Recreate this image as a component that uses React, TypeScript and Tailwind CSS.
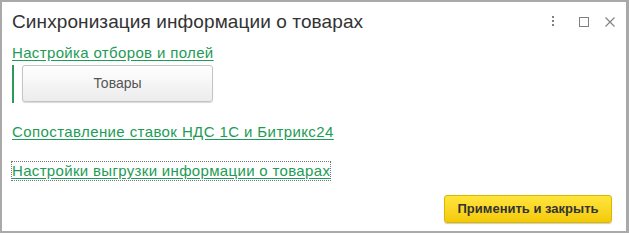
const font = { fontFamily: '"Liberation Sans", Arial, sans-serif' };

function WindowIcons() {
  return (
    <div className="flex items-center text-[#808080]">
      <svg width="4" height="12" viewBox="0 0 4 12" className="mr-[24px]">
        <rect x="1" y="0" width="2" height="2" fill="currentColor" />
        <rect x="1" y="4" width="2" height="2" fill="currentColor" />
        <rect x="1" y="8" width="2" height="2" fill="currentColor" />
      </svg>
      <svg width="10" height="10" viewBox="0 0 10 10" className="mr-[16px]">
        <rect x="0.5" y="0.5" width="9" height="9" fill="none" stroke="currentColor" strokeWidth="1" />
      </svg>
      <svg width="10" height="10" viewBox="0 0 10 10">
        <path d="M0.5 0.5 L9.5 9.5 M9.5 0.5 L0.5 9.5" stroke="currentColor" strokeWidth="1.1" fill="none" />
      </svg>
    </div>
  );
}

export default function App() {
  return (
    <div
      className="w-[629px] h-[233px] bg-white border-2 border-[#a9a9a9] border-r-[3px] flex flex-col text-[#333]"
      style={font}
    >
      <div className="flex items-start justify-between pl-[10px] pr-[11px] pt-[8px]">
        <h1 className="text-[19px] leading-[24px] tracking-[0.1px] text-[#333]">Синхронизация информации о товарах</h1>
        <div className="pt-[6px]">
          <WindowIcons />
        </div>
      </div>

      <div className="flex flex-col pl-[10px] pt-[10px]">
        <a className="text-[15px] leading-[18px] text-[#1e9b55] underline underline-offset-2 w-fit tracking-[0.35px]">
          Настройка отборов и полей
        </a>
        <div className="flex mt-[3px] border-l-2 border-[#2b9a5b] pl-[8px] h-[38px]">
          <button className="w-[191px] h-[37px] rounded-[3px] border border-[#c4c4c4] bg-gradient-to-b from-white to-[#ececec] text-[14px] text-[#555] shadow-[0_1px_1px_rgba(0,0,0,0.15)]">
            Товары
          </button>
        </div>
        <a className="mt-[20px] text-[15px] leading-[18px] text-[#1e9b55] underline underline-offset-2 w-fit tracking-[0.4px]">
          Сопоставление ставок НДС 1С и Битрикс24
        </a>
        <a className="mt-[21px] text-[15px] leading-[18px] text-[#1e9b55] underline underline-offset-2 w-fit tracking-[0.33px] outline outline-1 outline-dotted outline-[#777]">
          Настройки выгрузки информации о товарах
        </a>
      </div>

      <div className="flex justify-end pr-[14px] mt-auto pb-[8px]">
        <button className="w-[168px] h-[28px] rounded-[3px] border border-[#d9b800] bg-gradient-to-b from-[#ffe53a] to-[#f4c900] text-[13px] font-bold text-[#333] shadow-[0_1px_1px_rgba(0,0,0,0.2)]">
          Применить и закрыть
        </button>
      </div>
    </div>
  );
}
